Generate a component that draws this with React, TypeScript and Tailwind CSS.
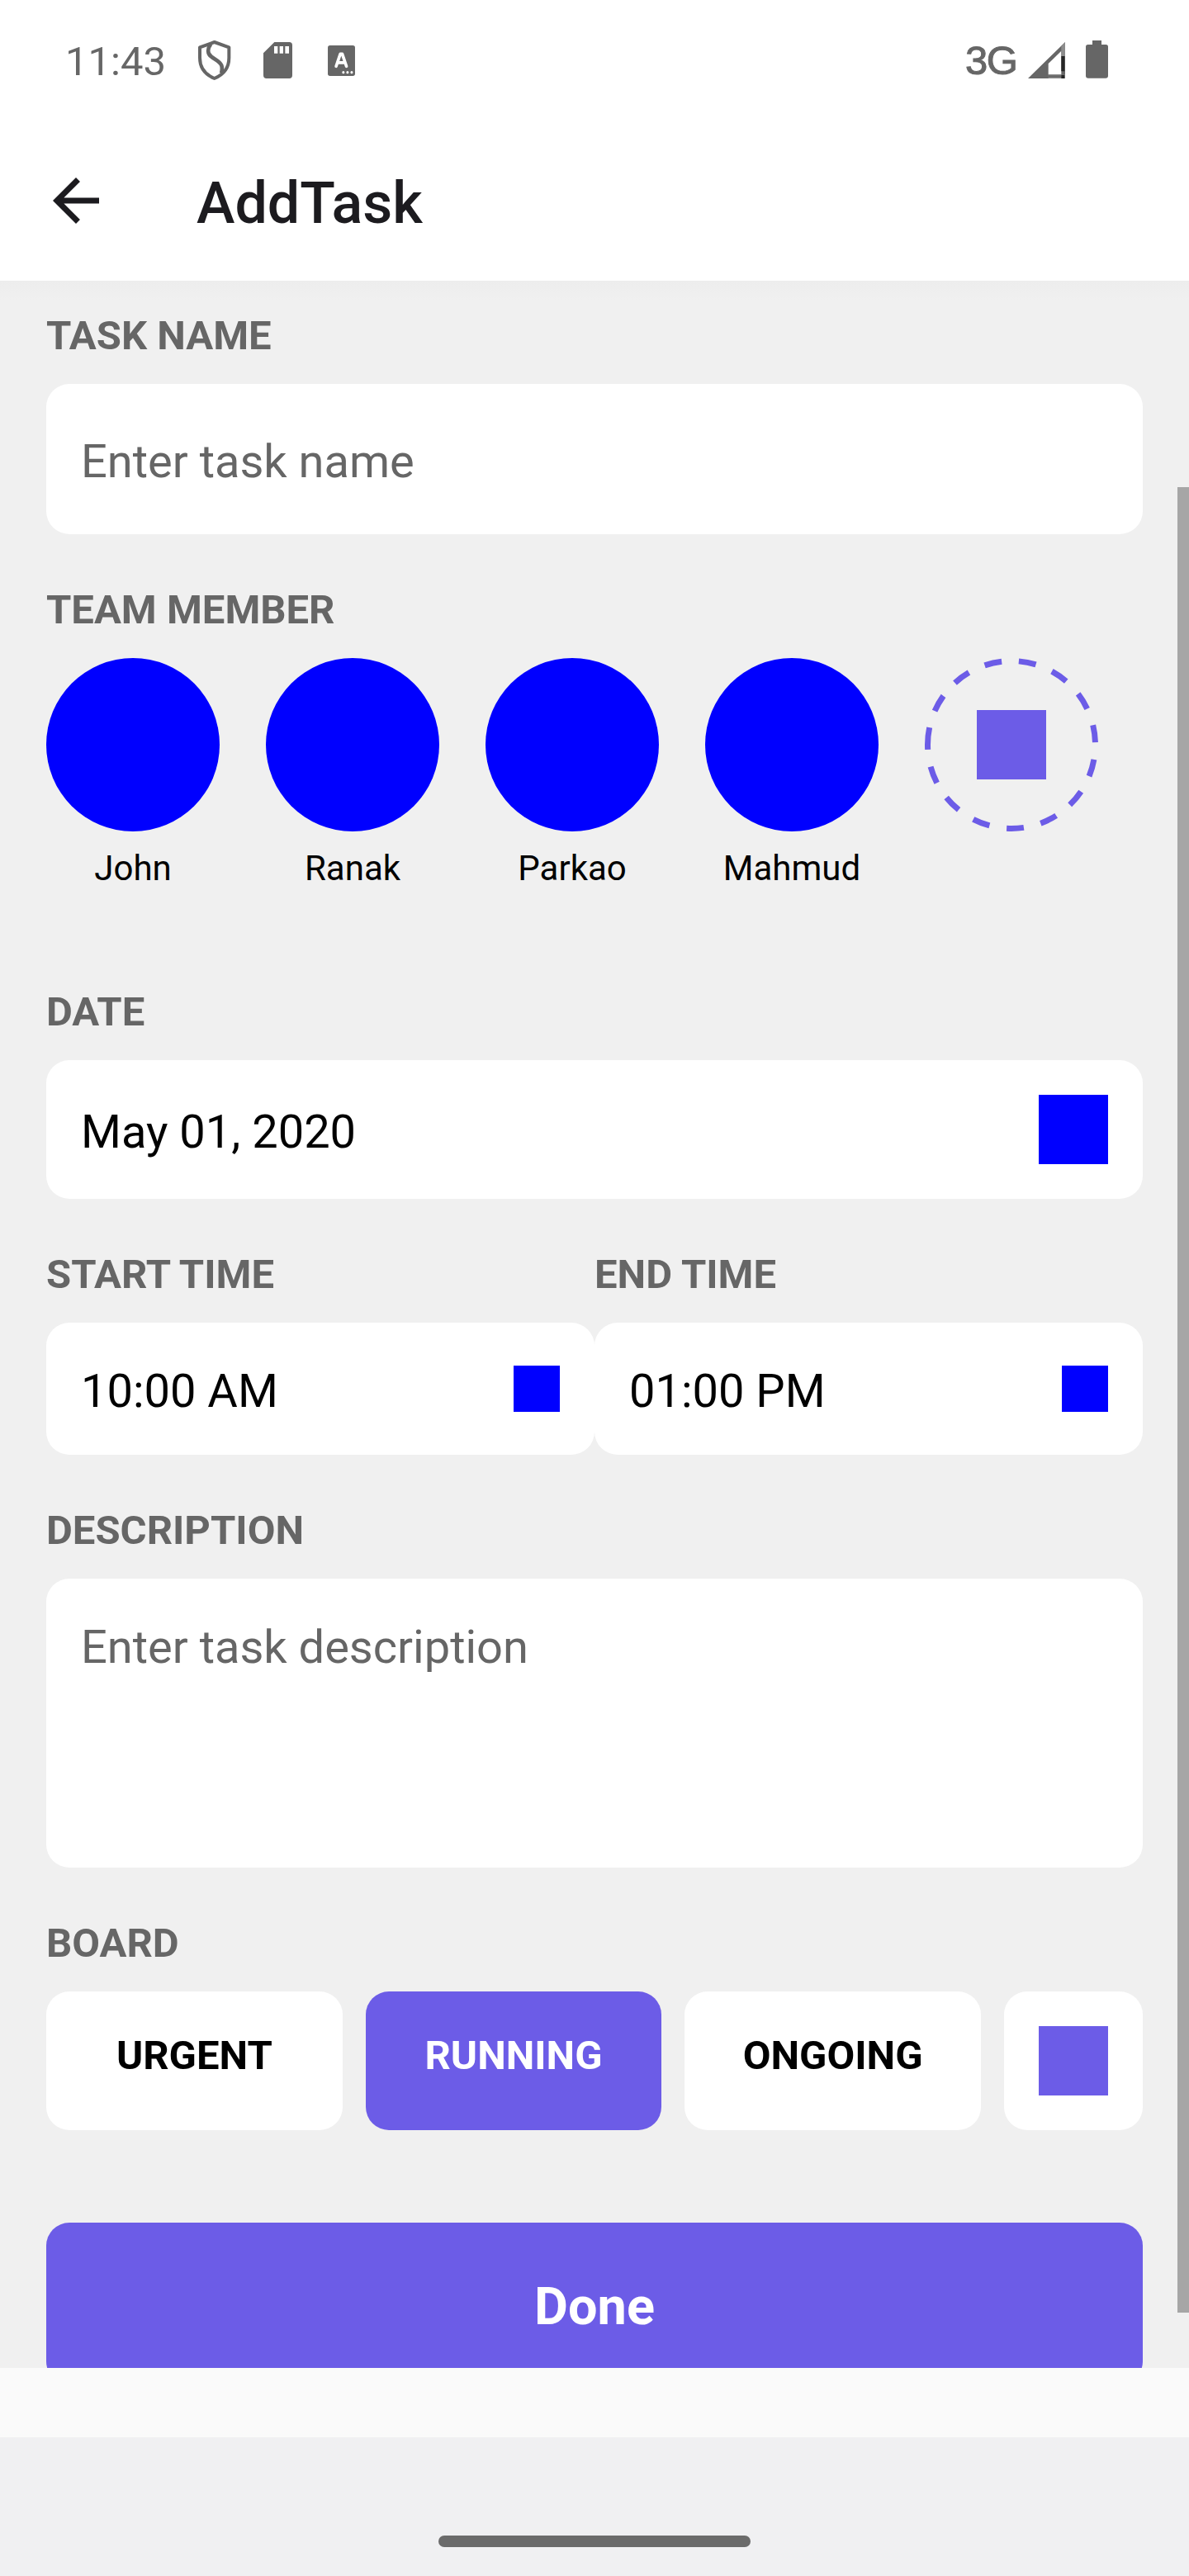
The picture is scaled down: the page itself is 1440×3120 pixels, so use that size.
import type { ReactNode } from "react";

const members = ["John", "Ranak", "Parkao", "Mahmud"];

function Label({ children }: { children: ReactNode }) {
  return (
    <div className="mb-[30px] h-[58px] text-[49px] leading-[60px] font-bold whitespace-nowrap text-[#666666]">
      {children}
    </div>
  );
}

function ShieldIcon() {
  return (
    <svg className="h-[50px] w-[41px]" viewBox="597 84 123 150" fill="none" stroke="#666666" strokeLinejoin="round">
      <path strokeWidth="12" d="M659 93 L712 112 V150 C712 188 690 212 659 225 C628 212 606 188 606 150 V112 Z" />
      <path strokeWidth="14" d="M646 100 C632 118 634 136 648 146 C662 157 680 163 685 178 C688 188 687 196 684 206" />
    </svg>
  );
}

function SdCardIcon() {
  return (
    <svg className="h-[44px] w-[35px]" viewBox="837 93 105 132">
      <path
        fill="#666666"
        fillRule="evenodd"
        d="M877 93 H931 Q942 93 942 104 V214 Q942 225 931 225 H848 Q837 225 837 214 V133 Z M876 108 V134 H889 V108 Z M896 108 V134 H909 V108 Z M916 108 V134 H930 V108 Z"
      />
    </svg>
  );
}

function LetterBoxIcon() {
  return (
    <svg className="h-[37px] w-[33px]" viewBox="1071 105 98 110">
      <rect x="1071" y="105" width="98" height="110" rx="8" fill="#666666" />
      <path d="M1101 180 L1116 136 H1123 L1138 180 M1108 167 H1131" fill="none" stroke="#fff" strokeWidth="11" strokeLinecap="round" strokeLinejoin="round" />
      <circle cx="1127" cy="202" r="4.5" fill="#fff" />
      <circle cx="1142" cy="202" r="4.5" fill="#fff" />
      <circle cx="1157" cy="202" r="4.5" fill="#fff" />
    </svg>
  );
}

function SignalIcon() {
  return (
    <svg className="h-[44px] w-[45px]" viewBox="375 92 135 132">
      <path fill="#666666" fillRule="evenodd" d="M375 224 L510 92 V224 Z M449 170 V210 H496 V124 Z" />
      <path fill="#8c8c8c" d="M449 210 H510 V224 H449 Z M496 107 L510 93 V143 H496 Z" />
      <path fill="#666666" d="M449 213 H496 V220 H449 Z" />
      <path fill="#262626" d="M496 143 H508 V198 H496 Z M496 211 H508 V224 H496 Z" />
    </svg>
  );
}

function BatteryIcon() {
  return (
    <svg className="h-[46px] w-[27px]" viewBox="585 87 81 138">
      <path fill="#666666" d="M609 87 H642 V102 H658 Q666 102 666 110 V215 Q666 224 657 224 H594 Q585 224 585 215 V110 Q585 102 593 102 H609 Z" />
    </svg>
  );
}

function TimeField({ label, value }: { label: string; value: string }) {
  return (
    <div className="flex-1">
      <Label>{label}</Label>
      <div className="flex h-[160px] items-center justify-between rounded-[28px] bg-white px-[42px]">
        <span className="pt-[6px] text-[56px] leading-[66px] text-black">{value}</span>
        <span className="size-14 bg-[#0000ff]" />
      </div>
    </div>
  );
}

function BoardChip({ name, active = false }: { name: string; active?: boolean }) {
  return (
    <div
      className={`flex h-[168px] flex-1 justify-center rounded-[28px] pt-[49px] text-[49px] leading-[58px] font-bold ${
        active ? "bg-[#6c5ce7] text-white" : "bg-white text-black"
      }`}
    >
      {name}
    </div>
  );
}

export default function App() {
  return (
    <div className="flex h-[3120px] w-[1440px] flex-col overflow-hidden bg-[#f0f0f0] font-['Roboto',sans-serif]">
      <header className="h-[340px] shrink-0 bg-white">
        <div className="flex h-[146px] items-start justify-between pr-[98px] pl-[79px]">
          <div className="flex">
            <span className="mt-[46px] w-[160px] text-[49px] leading-[58px] text-[#666666]">11:43</span>
            <div className="mt-[48px]"><ShieldIcon /></div>
            <div className="mt-[51px] ml-[39px]"><SdCardIcon /></div>
            <div className="mt-[55px] ml-[43px]"><LetterBoxIcon /></div>
          </div>
          <div className="flex">
            <span className="mt-[44px] w-[76px] font-['Liberation_Sans',sans-serif] text-[49px] leading-[58px] tracking-[-1.5px] text-[#666666] [-webkit-text-stroke:1px_#666666]">
              3G
            </span>
            <div className="mt-[51px]"><SignalIcon /></div>
            <div className="mt-[49px] ml-[25px]"><BatteryIcon /></div>
          </div>
        </div>
        <div className="flex pl-[50px]">
          <svg className="mt-[55px] size-[84px]" viewBox="0 0 24 24" fill="#1c1b1f">
            <path d="M20 11H7.83l5.59-5.59L12 4l-8 8 8 8 1.41-1.41L7.83 13H20z" />
          </svg>
          <h1 className="mt-[59px] ml-[104px] text-[70px] leading-[82px] font-medium text-[#1c1b1f]">AddTask</h1>
        </div>
      </header>

      <main className="relative h-[2528px] shrink-0 overflow-hidden bg-linear-to-b from-[#ededed] to-[#f0f0f0] to-[24px] px-14 pt-[37px]">
        <section>
          <Label>TASK NAME</Label>
          <div className="flex h-[182px] items-center rounded-[28px] bg-white px-[42px]">
            <span className="pt-[6px] text-[56px] leading-[66px] text-[#666666]">Enter task name</span>
          </div>
        </section>

        <section className="mt-[62px] h-[487px]">
          <Label>TEAM MEMBER</Label>
          <div className="flex gap-14">
            {members.map((name) => (
              <div key={name} className="flex w-[210px] flex-col items-center">
                <div className="size-[210px] rounded-full bg-[#0000ff]" />
                <span className="mt-[20px] text-[42px] leading-[50px] text-black">{name}</span>
              </div>
            ))}
            <svg className="size-[210px]" viewBox="0 0 210 210">
              <path
                d="M3.5 105 A101.5 101.5 0 0 1 206.5 105 A101.5 101.5 0 0 1 3.5 105"
                pathLength="636"
                fill="none"
                stroke="#6c5ce7"
                strokeWidth="7"
                strokeDasharray="21 21"
              />
              <rect x="63" y="63" width="84" height="84" fill="#6c5ce7" />
            </svg>
          </div>
        </section>

        <section>
          <Label>DATE</Label>
          <div className="flex h-[168px] items-center justify-between rounded-[28px] bg-white px-[42px]">
            <span className="pt-[6px] text-[56px] leading-[66px] text-black">May 01, 2020</span>
            <span className="size-[84px] bg-[#0000ff]" />
          </div>
        </section>

        <section className="mt-[62px] flex">
          <TimeField label="START TIME" value="10:00 AM" />
          <TimeField label="END TIME" value="01:00 PM" />
        </section>

        <section className="mt-[62px]">
          <Label>DESCRIPTION</Label>
          <div className="h-[350px] rounded-[28px] bg-white px-[42px] pt-[50px]">
            <span className="block text-[56px] leading-[66px] text-[#666666]">Enter task description</span>
          </div>
        </section>

        <section className="mt-[62px]">
          <Label>BOARD</Label>
          <div className="flex gap-7">
            <BoardChip name="URGENT" />
            <BoardChip name="RUNNING" active />
            <BoardChip name="ONGOING" />
            <div className="flex size-[168px] items-center justify-center rounded-[28px] bg-white">
              <span className="size-[84px] bg-[#6c5ce7]" />
            </div>
          </div>
        </section>

        <div className="mt-[112px] flex h-[196px] justify-center rounded-[28px] bg-[#6c5ce7] pt-[65px] text-[63px] leading-[74px] font-bold text-white">
          Done
        </div>

        <div className="absolute top-[250px] right-0 h-[2211px] w-[14px] bg-[#a6a6a6]" />
      </main>

      <div className="h-[84px] shrink-0 bg-[#fafafa]" />
      <footer className="flex h-[168px] shrink-0 justify-center bg-[#f0f0f2] pt-[119px]">
        <div className="h-[14px] w-[378px] rounded-full bg-[#6b6b6b]" />
      </footer>
    </div>
  );
}
